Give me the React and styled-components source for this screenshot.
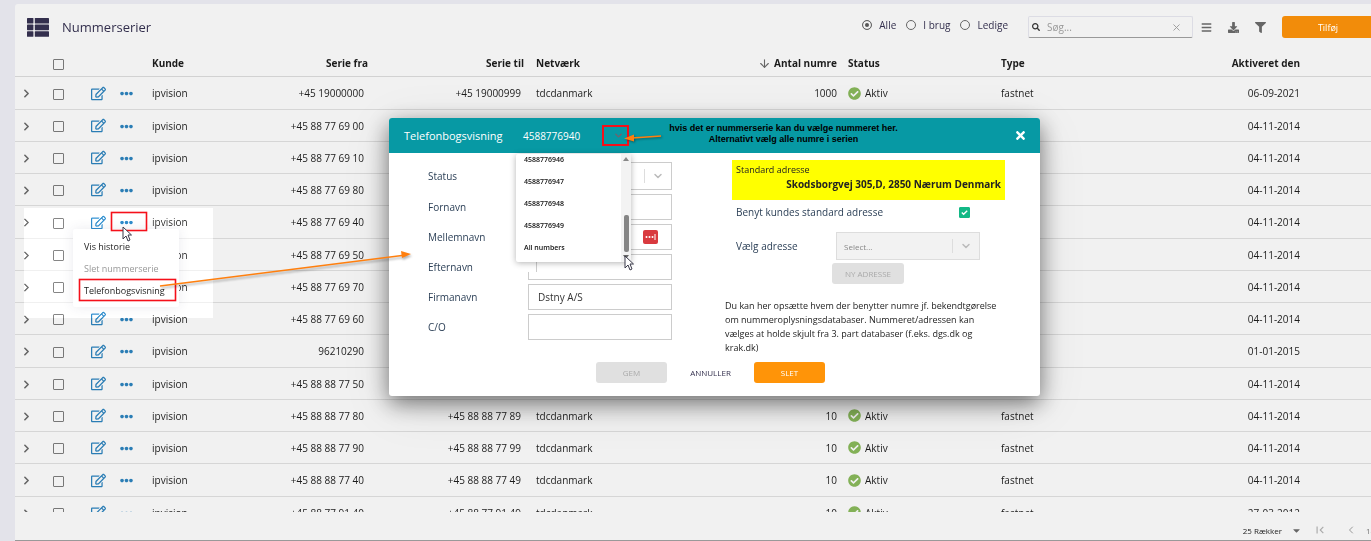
import React from "react";
import styled, { createGlobalStyle } from "styled-components";
import {
  FaRegEdit,
  FaBars,
  FaSearch,
  FaDownload,
  FaFilter,
  FaEllipsisH,
  FaCheckCircle,
  FaTimes,
  FaCaretDown,
} from "react-icons/fa";
import {
  FiChevronRight,
  FiChevronLeft,
  FiChevronDown,
  FiX,
  FiArrowDown,
} from "react-icons/fi";
import { MdFirstPage } from "react-icons/md";

const rows = [
  ["+45 19000000", "+45 19000999", 1000, "06-09-2021"],
  ["+45 88 77 69 00", "+45 88 77 69 09", 10, "04-11-2014"],
  ["+45 88 77 69 10", "+45 88 77 69 19", 10, "04-11-2014"],
  ["+45 88 77 69 80", "+45 88 77 69 89", 10, "04-11-2014"],
  ["+45 88 77 69 40", "+45 88 77 69 49", 10, "04-11-2014"],
  ["+45 88 77 69 50", "+45 88 77 69 59", 10, "04-11-2014"],
  ["+45 88 77 69 70", "+45 88 77 69 79", 10, "04-11-2014"],
  ["+45 88 77 69 60", "+45 88 77 69 69", 10, "04-11-2014"],
  ["96210290", "96210290", 1, "01-01-2015"],
  ["+45 88 88 77 50", "+45 88 88 77 59", 10, "04-11-2014"],
  ["+45 88 88 77 80", "+45 88 88 77 89", 10, "04-11-2014"],
  ["+45 88 88 77 90", "+45 88 88 77 99", 10, "04-11-2014"],
  ["+45 88 88 77 40", "+45 88 88 77 49", 10, "04-11-2014"],
  ["+45 88 77 91 40", "+45 88 77 91 49", 10, "27-03-2012"],
];

const columns = [22, 42, 38, 29, 114, 114, 156, 170, 142, 153, 155, 156, 65];

const numbers = ["4588776946", "4588776947", "4588776948", "4588776949", "All numbers"];

const ListIcon = () => (
  <svg width="22" height="19" viewBox="0 0 22 19" fill="#332f4d">
    {[0, 6.6, 13.2].map((y) => (
      <g key={y}>
        <rect y={y} width="6.4" height="5.6" rx="0.6" />
        <rect x="7.8" y={y} width="14.2" height="5.6" rx="0.6" />
      </g>
    ))}
  </svg>
);

const Pointer = () => (
  <svg width="10" height="16" viewBox="0 0 10 16">
    <path d="M1 1v12l3-3 2 5 2-1-2-5h3.5z" fill="#fff" stroke="#3a3a4a" />
  </svg>
);

const App = () => {
  return (
    <Page>
      <GlobalStyle />
      <Card>
        <Toolbar>
          <ListIcon />
          <Title>Nummerserier</Title>
          <Filters>
            <Choice>
              <Radio name="filter" defaultChecked /> Alle
            </Choice>
            <Choice>
              <Radio name="filter" /> I brug
            </Choice>
            <Choice>
              <Radio name="filter" /> Ledige
            </Choice>
          </Filters>
          <Search>
            <FaSearch size={8} color="#333" />
            <SearchInput placeholder="Søg..." aria-label="Søg" />
            <FiX size={11} color="#999" />
          </Search>
          <Tools>
            <IconButton aria-label="Kolonner">
              <FaBars size={11} />
            </IconButton>
            <IconButton aria-label="Download">
              <FaDownload size={11} />
            </IconButton>
            <IconButton aria-label="Filter">
              <FaFilter size={11} />
            </IconButton>
          </Tools>
          <AddButton>Tilføj</AddButton>
        </Toolbar>

        <TableArea>
          <Table>
            <colgroup>
              {columns.map((width, i) => (
                <Col key={i} $w={width} />
              ))}
            </colgroup>
            <thead>
              <tr>
                <Th />
                <Th $align="center">
                  <Tick aria-label="Vælg alle" />
                </Th>
                <Th />
                <Th />
                <Th>Kunde</Th>
                <Th $align="right">Serie fra</Th>
                <Th $align="right">Serie til</Th>
                <Th>Netværk</Th>
                <Th $align="right" $right={5}>
                  <FiArrowDown size={13} color="#666" /> Antal numre
                </Th>
                <Th>Status</Th>
                <Th>Type</Th>
                <Th $align="right">Aktiveret den</Th>
                <Th />
              </tr>
            </thead>
            <tbody>
              {rows.map(([from, to, count, date]) => (
                <Row key={from}>
                  <Td $align="center" $left={0} $right={0}>
                    <IconButton aria-label="Fold ud">
                      <FiChevronRight size={13} strokeWidth={3} />
                    </IconButton>
                  </Td>
                  <Td $align="center">
                    <Tick aria-label={`Vælg ${from}`} />
                  </Td>
                  <Td $align="center" $left={0} $right={0}>
                    <IconButton $blue aria-label="Rediger">
                      <FaRegEdit size={15} />
                    </IconButton>
                  </Td>
                  <Td $left={3} $right={0}>
                    <IconButton $blue aria-label="Mere">
                      <FaEllipsisH size={13} />
                    </IconButton>
                  </Td>
                  <Td>ipvision</Td>
                  <Td $align="right" $right={10}>{from}</Td>
                  <Td $align="right" $right={9}>{to}</Td>
                  <Td>tdcdanmark</Td>
                  <Td $align="right" $right={5}>{count}</Td>
                  <Td>
                    <Status>
                      <FaCheckCircle size={13} color="#83b157" /> Aktiv
                    </Status>
                  </Td>
                  <Td>fastnet</Td>
                  <Td $align="right">{date}</Td>
                  <Td />
                </Row>
              ))}
            </tbody>
          </Table>
        </TableArea>

        <Footer>
          <PageSize>
            25 Rækker <FaCaretDown size={11} color="#666" />
          </PageSize>
          <Pager>
            <IconButton aria-label="Første side">
              <MdFirstPage size={14} color="#aaa" />
            </IconButton>
            <IconButton aria-label="Forrige side">
              <FiChevronLeft size={12} color="#999" />
            </IconButton>
          </Pager>
          <PageCount>1-25</PageCount>
        </Footer>
      </Card>

      <Spotlight />
      <Menu>
        <MenuItem>Vis historie</MenuItem>
        <MenuItem disabled>Slet nummerserie</MenuItem>
        <MenuItem>Telefonbogsvisning</MenuItem>
      </Menu>

      <Overlay>
        <Modal role="dialog" aria-label="Telefonbogsvisning">
          <ModalHeader>
            <ModalTitle>Telefonbogsvisning</ModalTitle>
            <Picked>4588776940</Picked>
            <PickButton aria-label="Vælg nummer">
              <FiChevronDown size={11} strokeWidth={3} />
            </PickButton>
            <Hint>
              hvis det er nummerserie kan du vælge nummeret her.
              <br />
              Alternativt vælg alle numre i serien
            </Hint>
            <CloseButton aria-label="Luk">
              <FaTimes size={13} />
            </CloseButton>
          </ModalHeader>

          <ModalBody>
            <Form>
              <Field>
                <Label htmlFor="status">Status</Label>
                <SelectWrap>
                  <Select id="status" />
                  <Divider />
                  <FiChevronDown size={12} strokeWidth={3} />
                </SelectWrap>
              </Field>
              <Field>
                <Label htmlFor="fornavn">Fornavn</Label>
                <Input id="fornavn" />
              </Field>
              <Field>
                <Label htmlFor="mellemnavn">Mellemnavn</Label>
                <InputWrap>
                  <Input id="mellemnavn" />
                  <Badge>
                    <svg width="11" height="6" viewBox="0 0 11 6" fill="#fff">
                      <circle cx="1.5" cy="3" r="1" />
                      <circle cx="4.5" cy="3" r="1" />
                      <circle cx="7.5" cy="3" r="1" />
                      <rect x="9.5" width="1" height="6" />
                    </svg>
                  </Badge>
                </InputWrap>
              </Field>
              <Field>
                <Label htmlFor="efternavn">Efternavn</Label>
                <Input id="efternavn" />
              </Field>
              <Field>
                <Label htmlFor="firmanavn">Firmanavn</Label>
                <Input id="firmanavn" defaultValue="Dstny A/S" />
              </Field>
              <Field>
                <Label htmlFor="co">C/O</Label>
                <Input id="co" />
              </Field>
            </Form>

            <Side>
              <Address>
                Standard adresse
                <AddressLine>Skodsborgvej 305,D, 2850 Nærum Denmark</AddressLine>
              </Address>
              <UseDefault>
                Benyt kundes standard adresse
                <Tick defaultChecked />
              </UseDefault>
              <AddressField>
                <Label htmlFor="adresse">Vælg adresse</Label>
                <SelectWrap $off>
                  <Select id="adresse" disabled>
                    <option>Select...</option>
                  </Select>
                  <Divider />
                  <FiChevronDown size={12} strokeWidth={3} />
                </SelectWrap>
              </AddressField>
              <NewAddress disabled>NY ADRESSE</NewAddress>
              <Note>
                Du kan her opsætte hvem der benytter numre jf. bekendtgørelse om
                nummeroplysningsdatabaser. Nummeret/adressen kan vælges at holde
                skjult fra 3. part databaser (f.eks. dgs.dk og krak.dk)
              </Note>
            </Side>
          </ModalBody>

          <Actions>
            <Action disabled>GEM</Action>
            <Action $plain>ANNULLER</Action>
            <Action>SLET</Action>
          </Actions>

          <Tail />
          <Dropdown>
            <Options>
              {numbers.map((n) => (
                <Option key={n}>{n}</Option>
              ))}
            </Options>
            <Scrollbar>
              <svg width="6" height="4" viewBox="0 0 6 4" fill="#888">
                <path d="M0 4L3 0l3 4z" />
              </svg>
              <Thumb />
              <svg width="6" height="4" viewBox="0 0 6 4" fill="#666">
                <path d="M0 0h6L3 4z" />
              </svg>
            </Scrollbar>
          </Dropdown>
          <HintArrow viewBox="0 0 42 14">
            <path d="M38 5L9 7" stroke="#ff7f0e" strokeWidth="1.5" />
            <path d="M1 7.5l10-4v7z" fill="#ff7f0e" />
          </HintArrow>
          <ListPointer>
            <Pointer />
          </ListPointer>
        </Modal>
      </Overlay>

      <Marks viewBox="0 0 420 310">
        <g fill="none" stroke="#f5101a" strokeWidth="1.6">
          <rect x="111.5" y="212.5" width="35" height="18" />
          <rect x="79.5" y="279.5" width="96" height="21" />
        </g>
        <g className="arrow">
          <path d="M160 286L402 255.5" stroke="#ff7f0e" strokeWidth="1.5" />
          <path d="M411 254l-10-3 1 7z" fill="#ff7f0e" />
        </g>
      </Marks>
      <MenuPointer>
        <Pointer />
      </MenuPointer>
    </Page>
  );
};

export default App;

const GlobalStyle = createGlobalStyle`
  * {
    box-sizing: border-box;
  }

  body {
    margin: 0;
    font-family: "Open Sans", "Noto Sans", sans-serif;
    font-size: 10px;
    color: #1c1c1c;
  }

  button, input, select {
    font: inherit;
    color: inherit;
    margin: 0;
  }
`;

const Page = styled.div`
  position: relative;
  height: 100vh;
  padding: 4px 0 0 15px;
  overflow: hidden;
  background: #e3e3ea;
`;

const Card = styled.div`
  display: flex;
  flex-direction: column;
  height: 100%;
  background: #f1f1f1;
  border-top-left-radius: 3px;
  border-bottom: 1px solid #999;
`;

const Toolbar = styled.header`
  display: flex;
  align-items: center;
  height: 46px;
  padding-left: 12px;
  color: #332f4d;
`;

const Title = styled.h1`
  flex: 1;
  margin: 0 0 0 13px;
  font-size: 13px;
  font-weight: 400;
`;

const Filters = styled.div`
  display: flex;
  gap: 10px;
  margin-right: 20px;
  padding-bottom: 4px;
`;

const Choice = styled.label`
  display: flex;
  align-items: center;
  gap: 7px;
`;

const Radio = styled.input.attrs({ type: "radio" })`
  appearance: none;
  width: 10px;
  height: 10px;
  border: 1px solid #666;
  border-radius: 50%;

  &:checked {
    background: #555;
    box-shadow: inset 0 0 0 2px #f1f1f1;
  }
`;

const Search = styled.div`
  display: flex;
  align-items: center;
  width: 165px;
  height: 22px;
  padding: 0 10px 0 3px;
  border: 1px solid #dcdce4;
  border-bottom: 1px solid #999;
  border-radius: 2px;
`;

const SearchInput = styled.input`
  flex: 1;
  min-width: 0;
  padding: 0 7px;
  border: 0;
  outline: 0;
  background: none;

  &::placeholder {
    color: #999;
  }
`;

const Tools = styled.div`
  display: flex;
  gap: 16px;
  margin: 0 16px 0 8px;
`;

const IconButton = styled.button`
  display: inline-flex;
  align-items: center;
  padding: 0;
  border: 0;
  background: none;
  color: ${({ $blue }) => ($blue ? "#2a7db5" : "#666")};
  vertical-align: middle;
`;

const AddButton = styled.button`
  width: 92px;
  height: 22px;
  margin-right: -3px;
  border: 0;
  border-radius: 3px;
  background: #f28c0a;
  color: #fff;
  font-size: 9px;
`;

const TableArea = styled.div`
  flex: 1;
  min-height: 0;
  overflow: hidden;
`;

const Table = styled.table`
  width: 100%;
  table-layout: fixed;
  border-spacing: 0;
`;

const Col = styled.col`
  width: ${({ $w }) => $w}px;
`;

const Th = styled.th`
  height: 27px;
  padding: 0 ${({ $right = 6 }) => $right}px 0 6px;
  border-bottom: 1px solid #d2d2d2;
  text-align: ${({ $align }) => $align || "left"};
  font-weight: 700;
  white-space: nowrap;

  svg {
    vertical-align: middle;
  }
`;

const Row = styled.tr`
  height: 32px;

  &:nth-child(4n + 1) {
    height: 33px;
  }
`;

const Td = styled.td`
  padding: 0 ${({ $right = 6 }) => $right}px 0 ${({ $left = 6 }) => $left}px;
  border-bottom: 1px solid #d6d6d6;
  text-align: ${({ $align }) => $align || "left"};
  white-space: nowrap;
`;

const Tick = styled.input.attrs({ type: "checkbox" })`
  appearance: none;
  display: inline-block;
  width: 11px;
  height: 11px;
  border: 1px solid #777;
  border-radius: 1px;
  vertical-align: middle;

  &:checked {
    border-color: #12b886;
    background: #12b886
      url("data:image/svg+xml,%3Csvg xmlns='http://www.w3.org/2000/svg' viewBox='0 0 10 10'%3E%3Cpath d='M2 5l2 2 4-4' fill='none' stroke='white' stroke-width='1.5'/%3E%3C/svg%3E");
  }
`;

const Status = styled.span`
  display: flex;
  align-items: center;
  gap: 4px;
`;

const Footer = styled.footer`
  display: flex;
  align-items: center;
  justify-content: flex-end;
  height: 28px;
  padding-top: 8px;
`;

const PageSize = styled.button`
  display: flex;
  align-items: center;
  gap: 9px;
  margin-right: 11px;
  padding: 0;
  border: 0;
  background: none;
  font-size: 8px;
`;

const Pager = styled.div`
  display: flex;
  gap: 18px;
`;

const PageCount = styled.span`
  width: 5px;
  margin-left: 9px;
  overflow: hidden;
  color: #777;
  font-size: 8px;
  white-space: nowrap;
`;

const Spotlight = styled.div`
  position: absolute;
  left: 24px;
  top: 208px;
  width: 189px;
  height: 110px;
  background: #1c1c1c;
  mix-blend-mode: color-dodge;
`;

const Menu = styled.div`
  position: absolute;
  left: 73px;
  top: 229px;
  width: 106px;
  padding: 6px 0;
  border-radius: 2px;
  background: #fff;
  box-shadow: 0 0 12px rgba(60, 60, 100, 0.1);
`;

const MenuItem = styled.button`
  display: block;
  width: 100%;
  height: 22px;
  padding: 0 11px;
  border: 0;
  background: none;
  text-align: left;
  font-size: 9px;

  &:disabled {
    color: #999;
  }
`;

const Overlay = styled.div`
  position: absolute;
  inset: 0;
  display: flex;
  align-items: flex-start;
  justify-content: center;
  padding: 118px 0 0 58px;
`;

const Modal = styled.div`
  position: relative;
  width: 651px;
  padding-bottom: 13px;
  border-radius: 3px;
  background: #fff;
  box-shadow: 0 7px 22px rgba(0, 0, 0, 0.5), 0 10px 50px rgba(0, 0, 0, 0.1);
`;

const ModalHeader = styled.div`
  display: flex;
  align-items: center;
  height: 35px;
  padding: 0 13px 0 15px;
  border-radius: 3px 3px 0 0;
  background: #0799a4;
  color: #fff;
`;

const ModalTitle = styled.h2`
  width: 119px;
  margin: 0;
  font-size: 11px;
  font-weight: 400;
`;

const Picked = styled.span`
  width: 79px;
`;

const PickButton = styled.button`
  display: flex;
  align-items: center;
  justify-content: flex-end;
  width: 27px;
  height: 21px;
  padding: 0 3px 0 0;
  border: 2px solid #f5101a;
  background: none;
  color: #76616a;

  svg {
    flex: none;
  }
`;

const Hint = styled.p`
  flex: 1;
  margin: 0 0 4px 23px;
  padding-right: 99px;
  color: #000;
  font: 700 9px/11px "Liberation Sans", Arial, sans-serif;
  text-align: center;
  white-space: nowrap;
`;

const CloseButton = styled.button`
  display: flex;
  padding: 0;
  border: 0;
  background: none;
`;

const ModalBody = styled.div`
  display: flex;
  justify-content: space-between;
  padding: 7px 29px 0 39px;
  color: #2b3f56;
`;

const Form = styled.div`
  display: flex;
  flex-direction: column;
  gap: 4px;
  width: 244px;
  padding-top: 2px;
`;

const Field = styled.div`
  display: flex;
  align-items: center;
  justify-content: space-between;
`;

const Label = styled.label`
  flex: 1;
`;

const InputWrap = styled.div`
  position: relative;
`;

const Input = styled.input`
  display: block;
  width: 144px;
  height: 26px;
  padding: 0 9px;
  border: 1px solid #ccc;
  background: #fff;
  color: #333;
`;

const Badge = styled.span`
  position: absolute;
  top: 6px;
  right: 14px;
  display: flex;
  align-items: center;
  justify-content: center;
  width: 15px;
  height: 14px;
  border-radius: 2px;
  background: #d93a3f;
`;

const SelectWrap = styled.div`
  display: flex;
  align-items: center;
  gap: 7px;
  width: 144px;
  height: 28px;
  padding-right: 7px;
  border: 1px solid ${({ $off }) => ($off ? "#ddd" : "#ccc")};
  background: ${({ $off }) => ($off ? "#f2f2f2" : "#fff")};
  color: #bbb;
`;

const Select = styled.select`
  flex: 1;
  min-width: 0;
  appearance: none;
  padding: 0 7px;
  border: 0;
  background: none;
  color: #888;
  font-size: 8px;
  opacity: 1;
`;

const Divider = styled.span`
  width: 1px;
  height: 14px;
  background: #ddd;
`;

const Side = styled.div`
  width: 286px;
`;

const Address = styled.div`
  height: 40px;
  margin: 0 6px 0 7px;
  padding: 3px 4px 0;
  background: #ff0;
  color: #222;
  font-size: 9px;
  line-height: 14px;
`;

const AddressLine = styled.strong`
  display: block;
  font-size: 10px;
  text-align: right;
`;

const UseDefault = styled.label`
  display: flex;
  align-items: center;
  justify-content: space-between;
  height: 24px;
  padding: 0 41px 0 11px;
`;

const AddressField = styled.div`
  display: flex;
  align-items: center;
  margin-top: 8px;
  padding: 0 31px 0 11px;
`;

const NewAddress = styled.button`
  display: block;
  width: 72px;
  height: 21px;
  margin: 3px 0 0 107px;
  border: 0;
  border-radius: 3px;
  background: #e0e0e0;
  color: #aaa;
  font-size: 8px;
`;

const Note = styled.p`
  margin: 15px 0 0;
  padding-right: 10px;
  color: #222;
  font-size: 9px;
  line-height: 14px;
`;

const Actions = styled.div`
  display: flex;
  justify-content: center;
  gap: 8px;
  padding: 7px 8px 0 0;
`;

const Action = styled.button`
  width: 71px;
  height: 21px;
  border: 0;
  border-radius: 3px;
  background: ${({ $plain }) => ($plain ? "none" : "#ff9408")};
  color: ${({ $plain }) => ($plain ? "#332f4d" : "#fff")};
  font-size: 8px;

  &:disabled {
    background: #e0e0e0;
    color: #aaa;
  }
`;

const Tail = styled.div`
  position: absolute;
  left: 127px;
  top: 136px;
  width: 21px;
  height: 18px;
  border-right: 1px solid #ccc;
  background: #fff;
`;

const Dropdown = styled.div`
  position: absolute;
  left: 127px;
  top: 36px;
  display: flex;
  width: 115px;
  height: 108px;
  overflow: hidden;
  border-radius: 2px;
  background: #fff;
  box-shadow: 0 1px 6px rgba(0, 0, 0, 0.3);
`;

const Options = styled.ul`
  flex: 1;
  display: flex;
  flex-direction: column;
  justify-content: flex-end;
  margin: 0;
  padding: 0 0 3px 8px;
  list-style: none;
`;

const Option = styled.li`
  flex: none;
  color: #111;
  font-size: 7px;
  font-weight: 600;
  line-height: 22px;
`;

const Scrollbar = styled.div`
  display: flex;
  flex-direction: column;
  align-items: center;
  width: 10px;
  padding: 3px 0;
  background: #f3f3f3;
`;

const Thumb = styled.div`
  width: 5px;
  height: 37px;
  margin: auto 0 3px;
  border-radius: 2px;
  background: #858585;
`;

const HintArrow = styled.svg`
  position: absolute;
  left: 234px;
  top: 13px;
  width: 42px;
  height: 14px;
  filter: drop-shadow(1px 1px 1px rgba(0, 0, 0, 0.4));
`;

const ListPointer = styled.div`
  position: absolute;
  left: 235px;
  top: 137px;
`;

const Marks = styled.svg`
  position: absolute;
  left: 0;
  top: 0;
  width: 420px;
  height: 310px;
  pointer-events: none;

  .arrow {
    filter: drop-shadow(1px 2px 1px rgba(0, 0, 0, 0.3));
  }
`;

const MenuPointer = styled.div`
  position: absolute;
  left: 122px;
  top: 226px;
`;
